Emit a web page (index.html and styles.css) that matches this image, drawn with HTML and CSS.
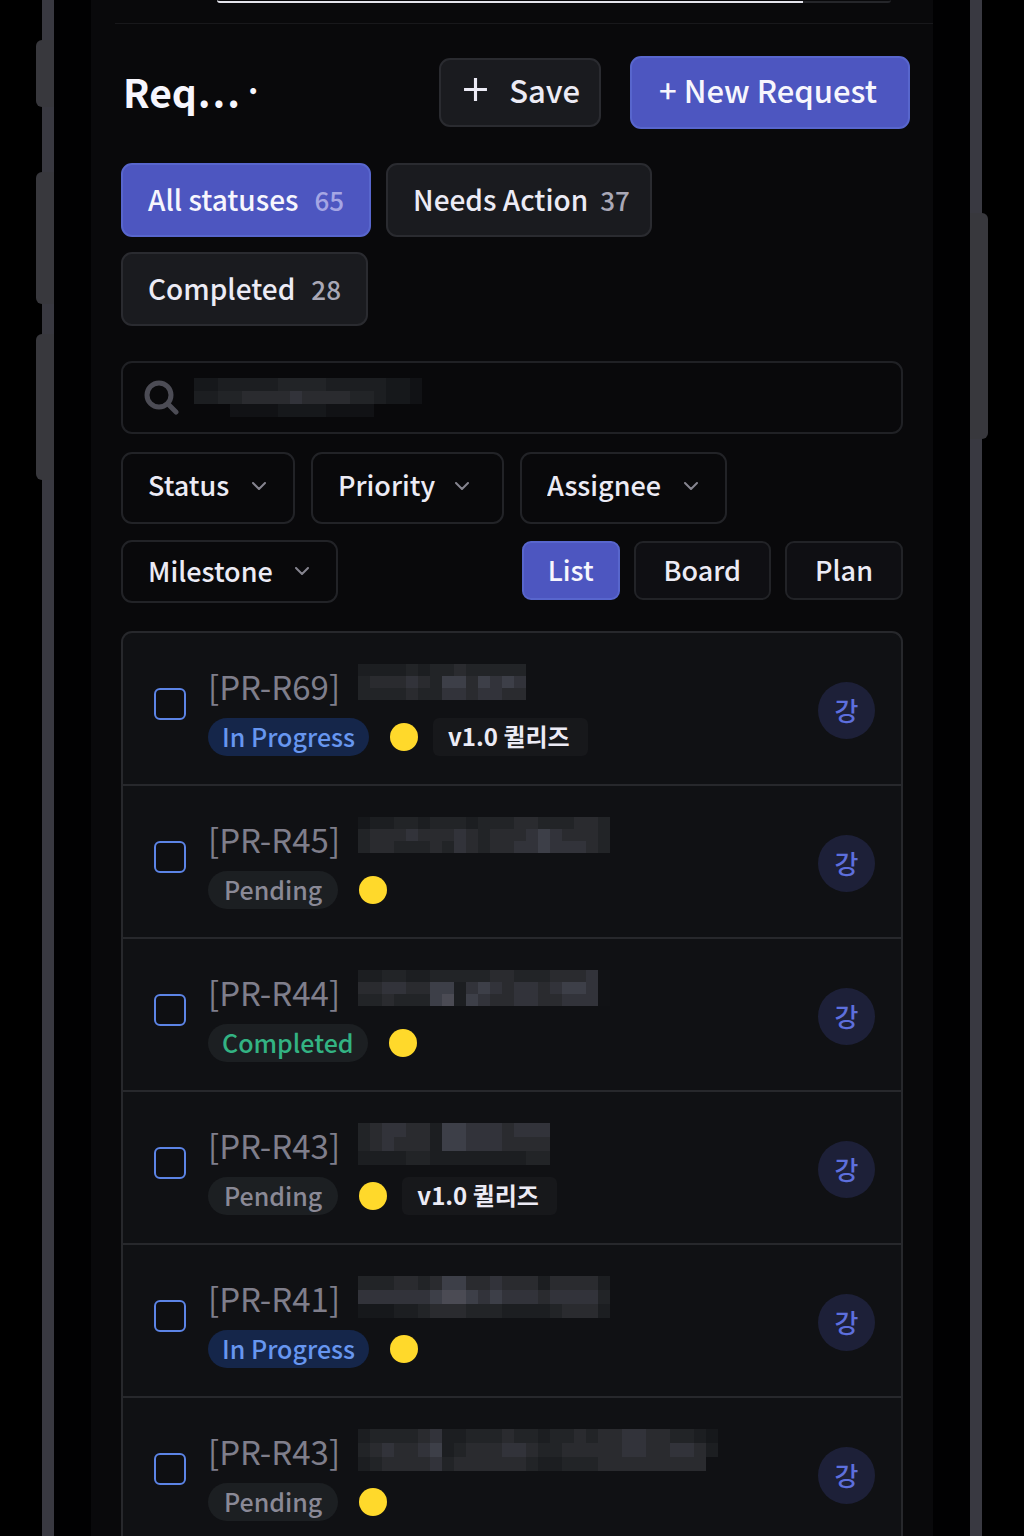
FILE: index.html
```
<!DOCTYPE html>
<html lang="en">
<head>
    <meta charset="UTF-8">
    <meta name="viewport" content="width=device-width, initial-scale=1">
    <title>Requests</title>
    <link rel="stylesheet" href="styles.css">
</head>
<body>

<div class="phone">
    <span class="side-btn left mute"></span>
    <span class="side-btn left vol-up"></span>
    <span class="side-btn left vol-down"></span>
    <span class="side-btn right power"></span>

    <main class="screen">
        <div class="topbar">
            <div class="tabs-edge"><div class="tabs-edge-active"></div></div>
        </div>

        <header class="header">
            <h1>Req… <span class="mid">·</span></h1>
            <button type="button" class="btn save">
                <svg class="plus" viewBox="0 0 24 24"><path d="M12 1v22M1 12h22"/></svg>
                Save
            </button>
            <button type="button" class="btn primary new">+ New Request</button>
        </header>

        <div class="statuses">
            <button type="button" class="btn primary">All statuses <span class="count">65</span></button>
            <button type="button" class="btn tight">Needs Action <span class="count">37</span></button>
            <button type="button" class="btn">Completed <span class="count">28</span></button>
        </div>

        <label class="search">
            <svg class="search-icon" viewBox="0 0 36 36"><circle cx="16" cy="15" r="12"/><path d="M25 24l8 8"/></svg>
            <svg class="mosaic" data-w="12" data-h="13" data-cells="2233333444433333221|3344555565555443221|0001111222211110000"></svg>
            <input type="search" aria-label="Search requests">
        </label>

        <div class="filters">
            <label class="filter">
                <select aria-label="Status"><option>Status</option></select>
                <svg class="chevron" viewBox="0 0 14 8"><path d="M1 1l6 6 6-6"/></svg>
            </label>
            <label class="filter wide">
                <select aria-label="Priority"><option>Priority</option></select>
                <svg class="chevron" viewBox="0 0 14 8"><path d="M1 1l6 6 6-6"/></svg>
            </label>
            <label class="filter">
                <select aria-label="Assignee"><option>Assignee</option></select>
                <svg class="chevron" viewBox="0 0 14 8"><path d="M1 1l6 6 6-6"/></svg>
            </label>
            <label class="filter short">
                <select aria-label="Milestone"><option>Milestone</option></select>
                <svg class="chevron" viewBox="0 0 14 8"><path d="M1 1l6 6 6-6"/></svg>
            </label>
            <div class="views">
                <button type="button" class="btn primary">List</button>
                <button type="button" class="btn">Board</button>
                <button type="button" class="btn">Plan</button>
            </div>
        </div>

        <ul class="requests">
            <li class="request">
                <input type="checkbox" aria-label="Select PR-R69">
                <div class="info">
                    <div class="title">[PR-R69]
                        <svg class="mosaic" data-w="12" data-h="12" data-cells="33334344544444|45556547757676|44445446656655"></svg>
                    </div>
                    <div class="meta">
                        <span class="pill progress">In Progress</span>
                        <span class="dot"></span>
                        <span class="tag">v1.0 퀼리즈</span>
                    </div>
                </div>
                <span class="avatar">강</span>
            </li>
            <li class="request">
                <input type="checkbox" aria-label="Select PR-R45">
                <div class="info">
                    <div class="title">[PR-R45]
                        <svg class="mosaic" data-w="12" data-h="12" data-cells="233443444344455444554|455565556545556765554|455444546545566766654"></svg>
                    </div>
                    <div class="meta">
                        <span class="pill">Pending</span>
                        <span class="dot"></span>
                    </div>
                </div>
                <span class="avatar">강</span>
            </li>
            <li class="request">
                <input type="checkbox" aria-label="Select PR-R44">
                <div class="info">
                    <div class="title">[PR-R44]
                        <svg class="mosaic" data-w="12" data-h="12" data-cells="334433444445544455561|556655773676566567761|445444783765566556661"></svg>
                    </div>
                    <div class="meta">
                        <span class="pill done">Completed</span>
                        <span class="dot"></span>
                    </div>
                </div>
                <span class="avatar">강</span>
            </li>
            <li class="request">
                <input type="checkbox" aria-label="Select PR-R43">
                <div class="info">
                    <div class="title">[PR-R43]
                        <svg class="mosaic" data-w="12" data-h="14" data-cells="4566553776665666|4565553776665555|3333443333333344"></svg>
                    </div>
                    <div class="meta">
                        <span class="pill">Pending</span>
                        <span class="dot"></span>
                        <span class="tag">v1.0 퀼리즈</span>
                    </div>
                </div>
                <span class="avatar">강</span>
            </li>
            <li class="request">
                <input type="checkbox" aria-label="Select PR-R41">
                <div class="info">
                    <div class="title">[PR-R41]
                        <svg class="mosaic" data-w="12" data-h="14" data-cells="444554577556555355553|666666788767666566664|222334555444333345553"></svg>
                    </div>
                    <div class="meta">
                        <span class="pill progress">In Progress</span>
                        <span class="dot"></span>
                    </div>
                </div>
                <span class="avatar">강</span>
            </li>
            <li class="request">
                <input type="checkbox" aria-label="Select PR-R43">
                <div class="info">
                    <div class="title">[PR-R43]
                        <svg class="mosaic" data-w="12" data-h="14" data-cells="344445633444544344545566554432|456556734555665445555566556653|345555645555554334445555555550"></svg>
                    </div>
                    <div class="meta">
                        <span class="pill">Pending</span>
                        <span class="dot"></span>
                    </div>
                </div>
                <span class="avatar">강</span>
            </li>
        </ul>
    </main>
</div>

<script src="mosaic.js"></script>
</body>
</html>
```
FILE: styles.css
```
* {
    box-sizing: border-box;
}
body {
    margin: 0;
    background: #000;
    color: #ecebf5;
    font-family: "Noto Sans CJK KR", "Noto Sans", sans-serif;
    font-size: 28px;
    font-weight: 500;
}
button, input, select {
    font: inherit;
    color: inherit;
}

/* phone body */
.phone {
    position: relative;
    height: 100vh;
    margin: 0 42px;
    padding: 0 37px;
    border: solid #393941;
    border-width: 0 12px;
    background: #010102;
}
.side-btn {
    position: absolute;
    width: 18px;
    background: #38383d;
}
.side-btn.left {
    left: -18px;
    border-radius: 6px 0 0 6px;
}
.side-btn.right {
    right: -18px;
    border-radius: 0 6px 6px 0;
}
.mute {
    top: 40px;
    height: 67px;
}
.vol-up {
    top: 172px;
    height: 132px;
}
.vol-down {
    top: 334px;
    height: 146px;
}
.power {
    top: 213px;
    height: 226px;
}
.screen {
    height: 100vh;
    overflow: hidden;
    padding: 0 30px;
    background: #09090b;
}

/* header */
.topbar {
    height: 24px;
    margin: 0 -30px 0 -6px;
    border-bottom: 1px solid #18181b;
}
.tabs-edge {
    height: 3px;
    margin: 0 42px 0 102px;
    border-bottom: 2px solid #25262a;
    border-radius: 0 0 8px 8px;
}
.tabs-edge-active {
    width: 87%;
    height: 3px;
    border-bottom: 2px solid #e4e4ec;
    border-radius: 0 0 0 8px;
}
.header {
    display: flex;
    align-items: center;
    margin: 32px -7px 34px 2px;
}
h1 {
    flex: 1;
    display: flex;
    align-items: center;
    margin: 0;
    padding-bottom: 4px;
    font-size: 39px;
    line-height: 60px;
    font-weight: 700;
    color: #f7f6fd;
}
.mid {
    margin-left: 4px;
    padding-bottom: 4px;
    font-size: 32px;
    line-height: 54px;
}
.btn {
    display: flex;
    align-items: center;
    justify-content: center;
    height: 74px;
    padding: 0 25px 2px;
    border: 2px solid #2a2b30;
    border-radius: 11px;
    background: #1a1b1f;
    white-space: nowrap;
}
.btn.primary {
    border-color: #5866cd;
    background: #4d56c0;
    color: #f7f6fd;
}
.save {
    gap: 21px;
    height: 69px;
    padding: 0 19px 6px 22px;
    margin-right: 29px;
    font-size: 31px;
}
.new {
    height: 73px;
    padding: 0 31px 6px 27px;
    font-size: 31px;
}
.plus {
    width: 25px;
    height: 25px;
    fill: none;
    stroke: #ecebf5;
    stroke-width: 3;
}

/* status tabs */
.statuses {
    display: flex;
    flex-wrap: wrap;
    gap: 15px;
}
.count {
    margin-left: 16px;
    font-size: 26px;
    color: #a9a8b6;
}
.primary .count {
    color: #a5a6e4;
}
.tight {
    padding-right: 20px;
}
.tight .count {
    margin-left: 12px;
}

/* search + filters */
.search {
    display: flex;
    align-items: center;
    height: 73px;
    margin: 35px 0 18px;
    padding: 0 20px;
    border: 2px solid #202125;
    border-radius: 11px;
}
.search-icon {
    width: 36px;
    height: 36px;
    margin-right: 15px;
    fill: none;
    stroke: #4c4c55;
    stroke-width: 5;
    stroke-linecap: round;
}
.search input {
    flex: 1;
    min-width: 0;
    border: 0;
    outline: 0;
    background: none;
}
.filters {
    display: flex;
    flex-wrap: wrap;
    gap: 16px;
    font-size: 27px;
}
.filter {
    position: relative;
}
.filter select {
    height: 72px;
    padding: 0 63px 8px 25px;
    border: 2px solid #222327;
    border-radius: 11px;
    background: #09090b;
    appearance: none;
}
.filter.wide select {
    padding-right: 66px;
}
.filter.short select {
    height: 63px;
    padding-bottom: 3px;
}
.chevron {
    position: absolute;
    right: 29px;
    top: 30px;
    width: 14px;
    height: 8px;
    fill: none;
    stroke: #85848f;
    stroke-width: 2;
    stroke-linecap: round;
    stroke-linejoin: round;
    pointer-events: none;
}
.wide .chevron {
    right: 35px;
}
.short .chevron {
    top: 27px;
}
.views {
    display: flex;
    gap: 14px;
    margin: 1px 0 0 auto;
}
.views .btn {
    height: 59px;
    padding: 0 24px 2px;
    border-radius: 9px;
}
.views .btn:not(.primary) {
    padding: 0 28px 2px;
    border-color: #222327;
    background: #0f0f13;
}

/* request list */
.requests {
    margin: 28px 0 0;
    padding: 0;
    list-style: none;
    border: 2px solid #27282c;
    border-bottom: 0;
    border-radius: 11px 11px 0 0;
    background: #101114;
}
.request {
    display: flex;
    align-items: center;
    height: 153px;
    padding: 30px 26px 27px 31px;
    border-bottom: 2px solid #27282c;
}
.request input {
    width: 32px;
    height: 32px;
    margin: 0 22px 12px 0;
    border: 2px solid #5c84e6;
    border-radius: 6px;
    background: #0e0f12;
    appearance: none;
}
.info {
    flex: 1;
    min-width: 0;
}
.title {
    display: flex;
    gap: 18px;
    height: 48px;
    line-height: 44px;
    margin-bottom: 6px;
    font-size: 33px;
    font-weight: 400;
    color: #7f7e8b;
}
.mosaic {
    flex: none;
}
.meta {
    display: flex;
    align-items: center;
}
.pill, .tag {
    height: 38px;
    line-height: 36px;
    white-space: nowrap;
}
.pill {
    padding: 0 16px;
    font-size: 25px;
    border-radius: 19px;
    background: #1c1f22;
    color: #8a8996;
}
.pill.progress, .pill.done {
    padding: 0 14px;
}
.pill.progress {
    background: #15264a;
    color: #6796f0;
}
.pill.done {
    color: #33b383;
}
.dot {
    width: 28px;
    height: 28px;
    margin: 0 15px 0 21px;
    border-radius: 50%;
    background: #ffd92b;
}
.tag {
    padding: 0 18px 0 15px;
    font-size: 24px;
    font-weight: 700;
    border-radius: 6px;
    background: #17181b;
    color: #ecebf5;
}
.avatar {
    width: 57px;
    height: 57px;
    border-radius: 50%;
    background: #1d2038;
    color: #5d6fdd;
    font-size: 26px;
    line-height: 56px;
    text-align: center;
}
```
FILE: mosaic.js
```
// shades for hidden text, 0 is transparent
const shades = ["none", "#111215", "#16181b", "#1c1e21", "#222427", "#2a2b2f", "#32333a", "#3d3f48", "#4b4b54"];

function draw_mosaic(svg) {
    const w = Number(svg.dataset.w);
    const h = Number(svg.dataset.h);
    const rows = svg.dataset.cells.split("|");
    svg.setAttribute("width", rows[0].length * w);
    svg.setAttribute("height", rows.length * h);
    let res = "";
    rows.forEach((row, y) => {
        for (let x = 0; x < row.length; x++) {
            res += `<rect x="${x * w}" y="${y * h}" width="${w}" height="${h}" fill="${shades[row[x]]}"/>`;
        }
    });
    svg.innerHTML = res;
}

document.querySelectorAll(".mosaic").forEach(draw_mosaic);
```
